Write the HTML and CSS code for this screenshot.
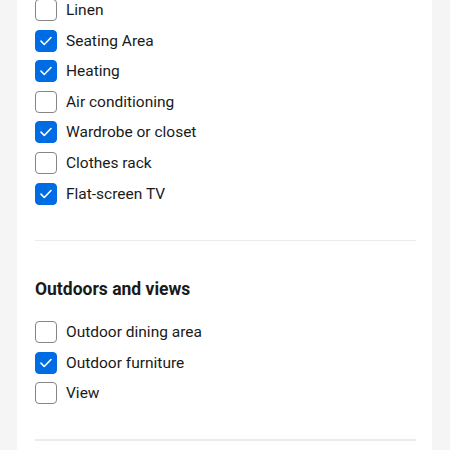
FILE: index.html
```html
<!DOCTYPE html>
<html>
<head>
<meta charset="utf-8">
<link rel="stylesheet" href="styles.css">
</head>
<body>
<div class="card">
  <ul class="opts">
    <li class="opt"><span class="box"></span><span class="lbl">Linen</span></li>
    <li class="opt"><span class="box on"><svg viewBox="0 0 22 22"><path d="M5.5 11.2l3.6 3.6 7.4-7.6"/></svg></span><span class="lbl">Seating Area</span></li>
    <li class="opt"><span class="box on"><svg viewBox="0 0 22 22"><path d="M5.5 11.2l3.6 3.6 7.4-7.6"/></svg></span><span class="lbl">Heating</span></li>
    <li class="opt"><span class="box"></span><span class="lbl">Air conditioning</span></li>
    <li class="opt"><span class="box on"><svg viewBox="0 0 22 22"><path d="M5.5 11.2l3.6 3.6 7.4-7.6"/></svg></span><span class="lbl">Wardrobe or closet</span></li>
    <li class="opt"><span class="box"></span><span class="lbl">Clothes rack</span></li>
    <li class="opt"><span class="box on"><svg viewBox="0 0 22 22"><path d="M5.5 11.2l3.6 3.6 7.4-7.6"/></svg></span><span class="lbl">Flat-screen TV</span></li>
  </ul>
  <hr class="sep">
  <h3 class="title">Outdoors and views</h3>
  <ul class="opts">
    <li class="opt"><span class="box"></span><span class="lbl">Outdoor dining area</span></li>
    <li class="opt"><span class="box on"><svg viewBox="0 0 22 22"><path d="M5.5 11.2l3.6 3.6 7.4-7.6"/></svg></span><span class="lbl">Outdoor furniture</span></li>
    <li class="opt"><span class="box"></span><span class="lbl">View</span></li>
  </ul>
  <hr class="sep">
</div>
</body>
</html>
```
FILE: styles.css
```css
html, body {
  margin: 0;
  padding: 0;
  background: #f5f5f5;
  font-family: Roboto, "Liberation Sans", sans-serif;
  color: #1a1a1a;
}
.card {
  background: #fff;
  margin: -1px 0 0 17px;
  width: 415px;
  box-sizing: border-box;
  padding: 0 16px 0 18px;
  height: 460px;
}
.opts {
  list-style: none;
  margin: 0;
  padding: 0;
  display: flex;
  flex-direction: column;
  gap: 8.6px;
}
.opt {
  display: flex;
  align-items: center;
  gap: 9px;
  height: 22px;
}
.box {
  width: 22px;
  height: 22px;
  box-sizing: border-box;
  border: 1px solid #868686;
  border-radius: 4px;
  flex: none;
  display: flex;
  align-items: center;
  justify-content: center;
}
.box.on {
  background: #006ce4;
  border-color: #006ce4;
}
.box svg {
  width: 22px;
  height: 22px;
  fill: none;
  stroke: #fff;
  stroke-width: 1.8;
  stroke-linecap: round;
  stroke-linejoin: round;
}
.lbl {
  font-size: 15.5px;
  line-height: 22px;
}
.sep {
  border: 0;
  height: 1.5px;
  background: #ebebeb;
  margin: 35px 0 0;
}
.title {
  margin: 37px 0 0;
  font-size: 17.5px;
  line-height: 22px;
  font-weight: 700;
  color: #1a1a1a;
}
.title + .opts {
  margin-top: 21px;
}
```
